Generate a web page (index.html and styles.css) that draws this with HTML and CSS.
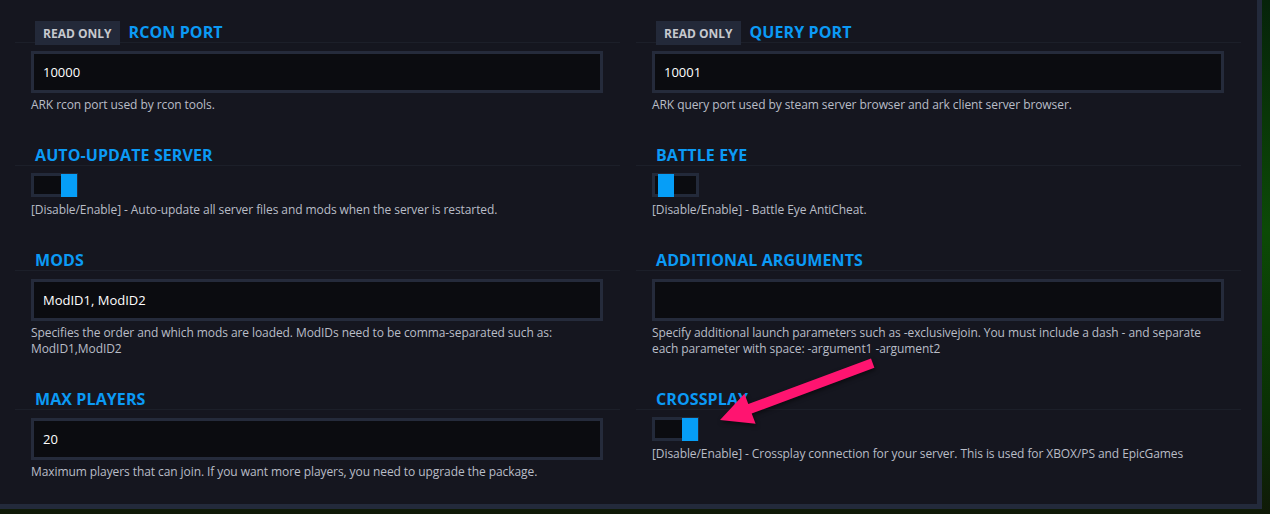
FILE: index.html
```html
<!DOCTYPE html>
<html>
<head>
  <meta charset="utf-8">
  <link rel="stylesheet" href="styles.css">
</head>
<body>
  <div class="backdrop">
    <div class="panel">
      <div class="settings-grid">

        <!-- RCON port -->
        <div class="field">
          <div class="field-label">
            <span class="badge">Read only</span>
            <span class="field-title">RCON PORT</span>
          </div>
          <div class="field-body">
            <input type="text" class="text-input" value="10000" readonly>
            <div class="help">ARK rcon port used by rcon tools.</div>
          </div>
        </div>

        <!-- Query port -->
        <div class="field">
          <div class="field-label">
            <span class="badge">Read only</span>
            <span class="field-title">QUERY PORT</span>
          </div>
          <div class="field-body">
            <input type="text" class="text-input" value="10001" readonly>
            <div class="help">ARK query port used by steam server browser and ark client server browser.</div>
          </div>
        </div>

        <!-- Auto update -->
        <div class="field">
          <div class="field-label">
            <span class="field-title">AUTO-UPDATE SERVER</span>
          </div>
          <div class="field-body">
            <div class="toggle on"><span class="knob"></span></div>
            <div class="help toggle-help">[Disable/Enable] - Auto-update all server files and mods when the server is restarted.</div>
          </div>
        </div>

        <!-- Battle eye -->
        <div class="field">
          <div class="field-label">
            <span class="field-title">BATTLE EYE</span>
          </div>
          <div class="field-body">
            <div class="toggle"><span class="knob"></span></div>
            <div class="help toggle-help">[Disable/Enable] - Battle Eye AntiCheat.</div>
          </div>
        </div>

        <!-- Mods -->
        <div class="field">
          <div class="field-label">
            <span class="field-title">MODS</span>
          </div>
          <div class="field-body">
            <input type="text" class="text-input" value="ModID1, ModID2">
            <div class="help">Specifies the order and which mods are loaded. ModIDs need to be comma-separated such as: ModID1,ModID2</div>
          </div>
        </div>

        <!-- Additional arguments -->
        <div class="field">
          <div class="field-label">
            <span class="field-title">ADDITIONAL ARGUMENTS</span>
          </div>
          <div class="field-body">
            <input type="text" class="text-input" value="">
            <div class="help">Specify additional launch parameters such as -exclusivejoin. You must include a dash - and separate each parameter with space: -argument1 -argument2</div>
          </div>
        </div>

        <!-- Max players -->
        <div class="field">
          <div class="field-label">
            <span class="field-title">MAX PLAYERS</span>
          </div>
          <div class="field-body">
            <input type="text" class="text-input" value="20">
            <div class="help">Maximum players that can join. If you want more players, you need to upgrade the package.</div>
          </div>
        </div>

        <!-- Crossplay -->
        <div class="field">
          <div class="field-label">
            <span class="field-title">CROSSPLAY</span>
          </div>
          <div class="field-body">
            <div class="toggle on"><span class="knob"></span></div>
            <div class="help toggle-help">[Disable/Enable] - Crossplay connection for your server. This is used for XBOX/PS and EpicGames</div>
          </div>
        </div>

      </div>
    </div>

    <!-- annotation arrow -->
    <svg class="arrow" width="1270" height="514" viewBox="0 0 1270 514">
      <polygon points="720,420 744.4,393.8 748.3,404.1 871,358.4 874.4,367.8 751.7,413.5 755.6,423.8" fill="#ff1470"/>
    </svg>
  </div>
</body>
</html>
```

FILE: styles.css
```css
body {
  margin: 0;
  padding: 0;
  font-family: 'Open Sans', 'Noto Sans', sans-serif;
  color: #b9bdc7;
}

.backdrop {
  position: relative;
  width: 1270px;
  height: 514px;
  overflow: hidden;
  background: linear-gradient(180deg, #06230a 0%, #0c4a06 45%, #0a3004 80%, #101a08 100%);
}

.panel {
  width: 1257px;
  height: 504px;
  box-sizing: content-box;
  background: #15161f;
  border-right: 5px solid #232a3b;
  border-bottom: 5px solid #232a3b;
  padding: 0;
}

.settings-grid {
  display: grid;
  grid-template-columns: 605px 605px;
  column-gap: 16px;
  row-gap: 32px;
  padding: 22px 0 0 15px;
}

.field-label {
  display: flex;
  align-items: center;
  height: 20px;
  padding-left: 20px;
  border-bottom: 1px solid #1c1f29;
}

.badge {
  display: inline-flex;
  align-items: center;
  height: 24px;
  margin-top: 2px;
  margin-right: 9px;
  padding: 0 8px;
  background: #232939;
  color: #c6c8ce;
  font-size: 12px;
  font-weight: 700;
  text-transform: uppercase;
}

.field-title {
  font-size: 16px;
  line-height: 20px;
  font-weight: 700;
  color: #0b9af5;
  letter-spacing: 0.1px;
}

.field-body {
  padding: 0 17px 0 16px;
}

.text-input {
  display: block;
  width: 100%;
  height: 42px;
  box-sizing: border-box;
  margin-top: 8px;
  padding: 0 9px;
  border: 3px solid #252b3b;
  background: #0b0c10;
  color: #ffffff;
  font-family: 'Open Sans', 'Noto Sans', sans-serif;
  font-size: 13px;
  outline: none;
}

.help {
  margin-top: 4px;
  font-size: 12px;
  line-height: 16px;
  letter-spacing: -0.08px;
  color: #b9bdc7;
}

.toggle-help {
  margin-top: 5px;
}

.toggle {
  position: relative;
  width: 47px;
  height: 24px;
  box-sizing: border-box;
  margin-top: 7px;
  border: 3px solid #232a3a;
  background: #0b0c10;
}

.toggle .knob {
  position: absolute;
  top: -2px;
  bottom: -3px;
  left: 3px;
  width: 16px;
  background: #069ef7;
}

.toggle.on .knob {
  left: auto;
  right: -2px;
}

.arrow {
  position: absolute;
  top: 0;
  left: 0;
  pointer-events: none;
  filter: drop-shadow(1px 2px 2px rgba(0,0,0,0.5));
}
```
